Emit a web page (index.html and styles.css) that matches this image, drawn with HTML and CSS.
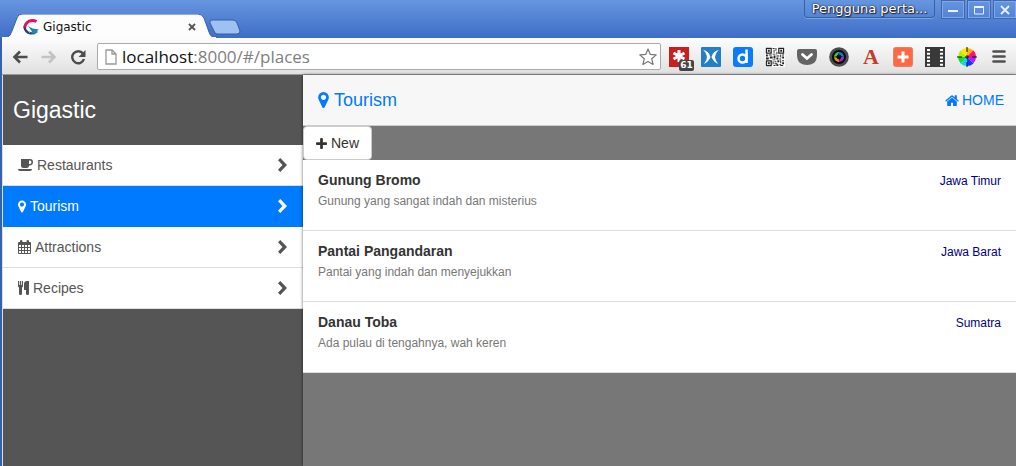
FILE: index.html
```html
<!DOCTYPE html>
<html lang="id">
<head>
<meta charset="utf-8">
<title>Gigastic</title>
<link rel="stylesheet" href="styles.css">
</head>
<body>
<svg class="defs" aria-hidden="true">
  <symbol id="marker" viewBox="0 0 1024 1536"><path d="M768 512q0-106-75-181t-181-75-181 75-75 181 75 181 181 75 181-75 75-181zm256 0q0 109-33 179l-364 774q-16 33-47 52t-68 19-68-19-46-52L33 691Q0 621 0 512q0-212 150-362T512 0t362 150 150 362z"/></symbol>
  <symbol id="chevron" viewBox="0 0 9 14"><path d="M0 2.300 2.300 0 9 7l-6.700 7L0 11.700 4.500 7z"/></symbol>
</svg>
<div class="window">
  <header class="titlebar">
    <div class="tab">
      <svg class="tab-shape" viewBox="0 0 214 24"><path d="M0 24C8 24 8 21 10 17L15 4Q16 0 20 0H196Q200 0 202 4L207 18Q209 24 214 24Z" fill="#fdfdfd" stroke="#3560ad" stroke-width="1"/><path d="M0 23h214v1H0z" fill="#fdfdfd"/></svg>
      <svg class="favicon" viewBox="0 0 16 16"><path d="M13.500 2.500Q10 .8 6 2.200 2 4.500 1.700 9" fill="none" stroke="#f00b5c" stroke-width="3"/><path d="M1.600 8.500Q2.500 13.500 7.500 14.200L12 14" fill="none" stroke="#263d66" stroke-width="2.400"/><path d="M5 7q4 3 11 3.500l-2 1.500 1 1-3 2-5-1 2-1.500z" fill="#2383ad"/><path d="M3 10l4 4" stroke="#62b8d2"/></svg>
      <span class="tab-title">Gigastic</span>
      <button class="tab-close" aria-label="Close tab"><svg viewBox="0 0 8 8"><path d="M1 1l6 6M7 1 1 7" stroke="#555" stroke-width="1.800"/></svg></button>
    </div>
    <button class="new-tab" aria-label="New tab"><svg viewBox="0 0 32 16"><path d="M3 1H24Q27 1 28 4L31 12Q31 15 28 15H8Q6 15 5 12L1 4Q0 1 3 1Z" fill="#9dc2f2" stroke="#365da8"/></svg></button>
    <div class="controls">
      <button class="profile">Pengguna perta...</button>
      <button class="win" aria-label="Minimize"><svg viewBox="0 0 12 12"><path d="M1 6h10v2H1z" fill="#e9f0fb"/></svg></button>
      <button class="win" aria-label="Maximize"><svg viewBox="0 0 12 12"><path d="M1.500 3h9v7h-9z" fill="none" stroke="#e9f0fb"/><path d="M1 2h10v2H1z" fill="#e9f0fb"/></svg></button>
      <button class="win" aria-label="Close"><svg viewBox="0 0 12 12"><path d="M2 2l8 8M10 2l-8 8" stroke="#e9f0fb" stroke-width="1.800"/></svg></button>
    </div>
  </header>

  <nav class="toolbar" aria-label="Browser">
    <div class="nav-buttons">
      <button aria-label="Back"><svg viewBox="0 0 16 16"><path d="M15.500 8H3M8 2.500 2.500 8 8 13.500" fill="none" stroke="#4c4c4c" stroke-width="2.600"/></svg></button>
      <button aria-label="Forward"><svg viewBox="0 0 16 16"><path d="M.5 8h12M8 2.500 13.500 8 8 13.500" fill="none" stroke="#c3c3c3" stroke-width="2.600"/></svg></button>
      <button aria-label="Reload"><svg viewBox="0 0 16 16"><path d="M13 4.500A6 6 0 1 0 14 10" fill="none" stroke="#4c4c4c" stroke-width="2.400"/><path d="M15.500 1v7h-7z" fill="#4c4c4c"/></svg></button>
    </div>
    <div class="address">
      <svg class="page-icon" viewBox="0 0 12 16"><path d="M1 1h6l4 4v10H1zM7 1v4h4" fill="#fff" stroke="#999" stroke-width="1.300"/></svg>
      <a class="url" href="#/places">localhost<span>:8000/#/places</span></a>
      <button aria-label="Bookmark"><svg class="star" viewBox="0 0 18 18"><path d="M9 1l2.300 5.400 5.900.5-4.500 3.900 1.400 5.700L9 13.500l-5.100 3 1.400-5.700L.8 6.900l5.900-.5z" fill="#fff" stroke="#777" stroke-width="1.200" stroke-linejoin="round"/></svg></button>
    </div>
    <div class="extensions">
      <button class="badged" aria-label="61 notifications"><svg viewBox="0 0 20 20"><path d="M0 0h20v20H0z" fill="#c91f1f"/><path d="M10 3v12M4.500 6l11 6M15.500 6l-11 6" stroke="#fff" stroke-width="3"/></svg><span class="badge">61</span></button>
      <button aria-label="Butterfly"><svg viewBox="0 0 20 20"><rect width="20" height="20" rx="1" fill="#257fc4"/><path d="M2 3q6 1 7.500 7-2 5-6.500 7 3-4 3-7Q5 5 2 3zM18 3q-6 1-7.500 7 2 5 6.500 7-3-4-3-7 1-5 4-7z" fill="#fff"/></svg></button>
      <button aria-label="Diigo"><svg viewBox="0 0 20 20"><rect width="20" height="20" rx="3" fill="#087cfb"/><circle cx="9.500" cy="11.500" r="4" fill="none" stroke="#fff" stroke-width="2.500"/><path d="M12.300 2.500h2.500V16h-2.500z" fill="#fff"/></svg></button>
      <button aria-label="QR code"><svg viewBox="0 0 21 21"><path d="M0 0h21v21H0z" fill="#fff"/><path d="M1.500 1.500h5v5h-5zM14.500 1.500h5v5h-5zM1.500 14.500h5v5h-5z" fill="none" stroke="#222" stroke-width="1.300"/><path d="M3 3h2v2H3zM16 3h2v2h-2zM3 16h2v2H3zM8 1h2v1H8zM11 1h1v3h-1zM9 3h1v3H9zM12 5h1v3h-1zM8 7h3v1H8zM1 8h2v2H1zM4 8h3v1H4zM5 10h3v2H5zM1 11h3v2H1zM9 9h2v3H9zM12 9h3v1h-3zM16 8h1v3h-1zM18 8h2v1h-2zM18 10h2v2h-2zM12 11h2v2h-2zM8 13h3v1H8zM15 12h2v1h-2zM8 15h1v3H8zM10 15h2v1h-2zM13 14h2v2h-2zM16 14h1v3h-1zM18 14h2v1h-2zM18 16h2v2h-2zM10 17h3v1h-3zM12 18h2v2h-2zM9 19h2v1H9zM15 18h2v1h-2zM16 19h3v1h-3z" fill="#222"/></svg></button>
      <button aria-label="Pocket"><svg viewBox="0 0 20 20"><path d="M2 2h16q2 0 2 2v4q0 5-3 8-3 2-7 2t-7-2Q0 13 0 8V4q0-2 2-2z" fill="#646464"/><path d="M5.500 7.500l4.500 4 4.500-4" fill="none" stroke="#fff" stroke-width="2.800" stroke-linecap="round"/></svg></button>
      <button aria-label="Camera"><svg viewBox="0 0 20 20"><circle cx="10" cy="10" r="9.800" fill="#4b4c50"/><circle cx="10" cy="10" r="7" fill="#08080c"/><path d="M10 5a5 5 0 0 0-5 5l4-1z" fill="#21d14a"/><path d="M10 5a5 5 0 0 1 5 5l-5-1z" fill="#0979d6"/><path d="M15 10a5 5 0 0 1-5 5l1-5z" fill="#b420d0"/><path d="M5 10a5 5 0 0 0 5 5l0-4z" fill="#ee8a25"/><circle cx="10" cy="10" r="2.400" fill="#080810"/></svg></button>
      <button class="letter" aria-label="Font tool">A</button>
      <button aria-label="Add"><svg viewBox="0 0 20 20"><rect x=".5" y=".5" width="19" height="19" rx="2" fill="#ff6847" stroke="#e9805f"/><path d="M10 4.500v11M4.500 10h11" stroke="#fff" stroke-width="3"/></svg></button>
      <button aria-label="Film"><svg viewBox="0 0 20 20"><path d="M0 0h20v20H0z" fill="#393939"/><path d="M3.500 2v17M16.500 2v17" stroke="#fff" stroke-width="3" stroke-dasharray="2 1.700"/></svg></button>
      <button aria-label="Colour wheel"><svg viewBox="0 0 20 20"><path d="M10 10V1a9 9 0 0 1 6.400 2.600z" fill="#ffb000"/><path d="M10 10l6.400-6.400A9 9 0 0 1 19 10z" fill="#ff4a10"/><path d="M10 10h9a9 9 0 0 1-2.600 6.400z" fill="#b020ff"/><path d="M10 10l6.400 6.400A9 9 0 0 1 10 19z" fill="#1238ff"/><path d="M10 10v9a9 9 0 0 1-6.400-2.600z" fill="#14d5ed"/><path d="M10 10l-6.400 6.400A9 9 0 0 1 1 10z" fill="#15d848"/><path d="M10 10H1a9 9 0 0 1 2.600-6.400z" fill="#b4f000"/><path d="M10 10 3.600 3.600A9 9 0 0 1 10 1z" fill="#ffe700"/><path d="M10 10 16.400 3.600A9 9 0 0 1 19 10z" fill="#ff0d78"/><path d="M10 0v20M0 10h20" stroke="#111" stroke-dasharray="5 3 4 3 5"/></svg></button>
      <button aria-label="Menu"><svg viewBox="0 0 20 20"><path d="M4.500 4.500h11M4.500 9.500h11M4.500 14.500h11" stroke="#505050" stroke-width="2.600" stroke-linecap="round"/></svg></button>
    </div>
  </nav>

  <div class="app">
    <aside class="sidebar">
      <h1>Gigastic</h1>
      <nav class="menu" aria-label="Categories">
        <a href="#/restaurants"><svg class="cup" viewBox="0 0 15 12"><path d="M3 0h9q3 0 3 3t-3 3.500h-1Q11 9 8.500 9H5.500Q3 9 3 6.500zM11 1.500V5h1q1.500 0 1.500-1.800T12 1.500zM0 10h14q0 2-2 2H2q-2 0-2-2z" fill-rule="evenodd"/></svg><span>Restaurants</span><svg class="chevron"><use href="#chevron"/></svg></a>
        <a class="active" href="#/places"><svg class="pin"><use href="#marker"/></svg><span>Tourism</span><svg class="chevron"><use href="#chevron"/></svg></a>
        <a href="#/attractions"><svg class="calendar" viewBox="0 0 13 14"><path fill-rule="evenodd" d="M1 2h1V1q0-1 1.200-1T4.400 1v1h4.200V1q0-1 1.200-1T11 1v1h1q1 0 1 1v10q0 1-1 1H1q-1 0-1-1V3q0-1 1-1zM1 5v2h2V5zm3 0v2h2V5zm3 0v2h2V5zm3 0v2h2V5zM1 8v2h2V8zm3 0v2h2V8zm3 0v2h2V8zm3 0v2h2V8zM1 11v2h2v-2zm3 0v2h2v-2zm3 0v2h2v-2zm3 0v2h2v-2z"/></svg><span>Attractions</span><svg class="chevron"><use href="#chevron"/></svg></a>
        <a href="#/recipes"><svg class="cutlery" viewBox="0 0 11 14"><path d="M0 0h1v4h.8V0h1.400v4H4V0h1v5q0 1.200-1 1.600V13q0 1-1.500 1T1 13V6.600Q0 6.200 0 5zM11 0v13q0 1-1.500 1T8 13V9H6V3q0-3 3-3z"/></svg><span>Recipes</span><svg class="chevron"><use href="#chevron"/></svg></a>
      </nav>
    </aside>
    <main class="content">
      <header class="content-head">
        <h2><svg class="pin-large"><use href="#marker"/></svg>Tourism</h2>
        <a class="home" href="#/"><svg viewBox="0 0 1664 1312"><path d="M1408 768v480q0 26-19 45t-45 19H960V928H704v384H320q-26 0-45-19t-19-45V768q0-1 1-6l575-474 575 474q1 2 1 6zm223-69-62 74q-8 9-21 11h-3q-13 0-21-7L832 200 140 777q-12 8-24 7-13-2-21-11l-62-74q-8-10-7-24t11-21L756 55q32-26 76-26t76 26l244 204V64q0-14 9-23t23-9h192q14 0 23 9t9 23v408l219 182q10 8 11 21t-7 24z"/></svg>HOME</a>
      </header>
      <button class="new"><svg viewBox="0 0 12 12"><path d="M4.500 1q0-1 1-1h1q1 0 1 1v3.500H11q1 0 1 1v1q0 1-1 1H7.500V11q0 1-1 1h-1q-1 0-1-1V7.500H1q-1 0-1-1v-1q0-1 1-1h3.500z"/></svg>New</button>
      <ul class="places">
        <li><div><h3>Gunung Bromo</h3><p>Gunung yang sangat indah dan misterius</p></div><span class="region">Jawa Timur</span></li>
        <li><div><h3>Pantai Pangandaran</h3><p>Pantai yang indah dan menyejukkan</p></div><span class="region">Jawa Barat</span></li>
        <li><div><h3>Danau Toba</h3><p>Ada pulau di tengahnya, wah keren</p></div><span class="region">Sumatra</span></li>
      </ul>
    </main>
  </div>
</div>
</body>
</html>
```
FILE: styles.css
```css
* { box-sizing: border-box; }
body { margin: 0; font: 14px/20px "Liberation Sans", Arial, sans-serif; color: #333; }
button { margin: 0; padding: 0; border: 0; background: none; font: inherit; color: inherit; }
a { color: inherit; text-decoration: none; }
h1, h2, h3, p, ul { margin: 0; padding: 0; }
svg { display: block; flex: none; }
.defs { position: absolute; width: 0; height: 0; }

.window { min-height: 100vh; display: flex; flex-direction: column; overflow: hidden; background: #3561b2; }

.titlebar { height: 38px; display: flex; align-items: flex-end; background: linear-gradient(#6696df, #3e6dc7); font-family: "DejaVu Sans", sans-serif; }
.tab { position: relative; width: 210px; height: 24px; margin-left: 2px; padding: 2px 16px 0 21px; display: flex; align-items: center; gap: 4px; font-size: 12px; color: #111; }
.tab-shape { position: absolute; left: 0; top: 0; width: 214px; height: 24px; }
.favicon { position: relative; width: 16px; height: 16px; }
.tab-title { position: relative; flex: 1; }
.tab-close { position: relative; }
.tab-close svg { width: 8px; height: 8px; }
.new-tab { align-self: flex-end; margin-bottom: 3px; margin-left: -3px; }
.new-tab svg { width: 32px; height: 16px; }
.controls { align-self: flex-start; margin-left: auto; display: flex; gap: 4px; }
.profile { width: 131px; height: 18px; margin-right: 3px; border: 1px solid #3c5f9d; border-top: 0; border-radius: 0 0 4px 4px; box-shadow: 0 1px 0 #7ba3e3; font-size: 13px; line-height: 18px; color: #fff; text-shadow: 0 0 1px #223, 0 0 2px #223, 1px 1px 1px #223; }
.win { width: 22px; height: 17px; margin-top: 1px; border: 1px solid #7fa8e8; outline: 1px solid #4267a8; display: grid; place-items: center; }
.win svg { width: 12px; height: 12px; }

.toolbar { height: 37px; margin-left: 2px; padding: 1px 7px 0 10px; display: flex; align-items: center; background: linear-gradient(#fdfdfd, #e0e0e0); border-bottom: 1px solid #9a9a9a; }
.nav-buttons { display: flex; gap: 13px; margin-right: 11px; }
.nav-buttons svg { width: 16px; height: 16px; }
.address { flex: 1; height: 27px; padding: 0 3px 0 7px; display: flex; align-items: center; background: #fff; border: 1px solid #aaa; border-radius: 2px; }
.page-icon { width: 12px; height: 16px; margin-right: 5px; }
.url { flex: 1; font: 17px/24px "Open Sans", sans-serif; color: #111; }
.url span { color: #808080; }
.star { width: 18px; height: 18px; }
.extensions { display: flex; gap: 12px; margin-left: 8px; }
.extensions button { width: 20px; height: 20px; }
.extensions svg { width: 20px; height: 20px; }
.badged { position: relative; }
.badge { position: absolute; left: 10px; top: 13px; width: 15px; height: 11px; border-radius: 2px; background: #444; color: #fff; font: bold 9px/11px "DejaVu Sans", sans-serif; text-align: center; }
.extensions .letter { font: bold 22px/20px "Liberation Serif", serif; color: #c33d29; }

.app { flex: 1; margin-left: 2px; border-left: 1px solid #ddd; display: flex; background: #777; }
.sidebar { width: 300px; flex: none; background: #555; }
.sidebar h1 { padding: 20px 10px; font-size: 23px; line-height: 30px; font-weight: normal; color: #fff; }
.menu a { height: 41px; padding: 0 16px 0 15px; display: flex; align-items: center; gap: 4px; background: #fff; border-bottom: 1px solid #ddd; color: #555; fill: #555; }
.menu a.active { background: #007aff; border-color: #007aff; color: #fff; fill: #fff; }
.menu span { flex: 1; }
.cup { width: 15px; height: 12px; }
.pin { width: 8px; height: 13px; }
.calendar { width: 13px; height: 14px; }
.cutlery { width: 11px; height: 14px; }
.chevron { width: 9px; height: 14px; }

.content { flex: 1; min-width: 0; box-shadow: 0 0 3px rgba(0, 0, 0, .6); }
.content-head { height: 51px; padding: 0 12px 0 15px; display: flex; align-items: center; justify-content: space-between; background: #f7f7f7; border-bottom: 1px solid #ccc; color: #007aff; fill: #007aff; }
.content-head h2 { display: flex; align-items: center; gap: 5px; font-size: 18px; font-weight: normal; }
.pin-large { width: 11px; height: 16px; }
.home { display: flex; align-items: center; gap: 3px; }
.home svg { width: 14px; height: 11px; }
.new { height: 34px; padding: 0 12px; display: flex; align-items: center; gap: 4px; background: #fff; border: 1px solid #ccc; border-radius: 4px; fill: #333; }
.new svg { width: 11px; height: 11px; }
.places { list-style: none; }
.places li { min-height: 71px; padding: 10px 15px; display: flex; justify-content: space-between; background: #fff; border-bottom: 1px solid #ddd; }
.places h3 { font-size: 14px; line-height: 20px; }
.places p { font-size: 12px; line-height: 22px; color: #777; }
.region { font-size: 12px; line-height: 22px; color: #000080; }
```
